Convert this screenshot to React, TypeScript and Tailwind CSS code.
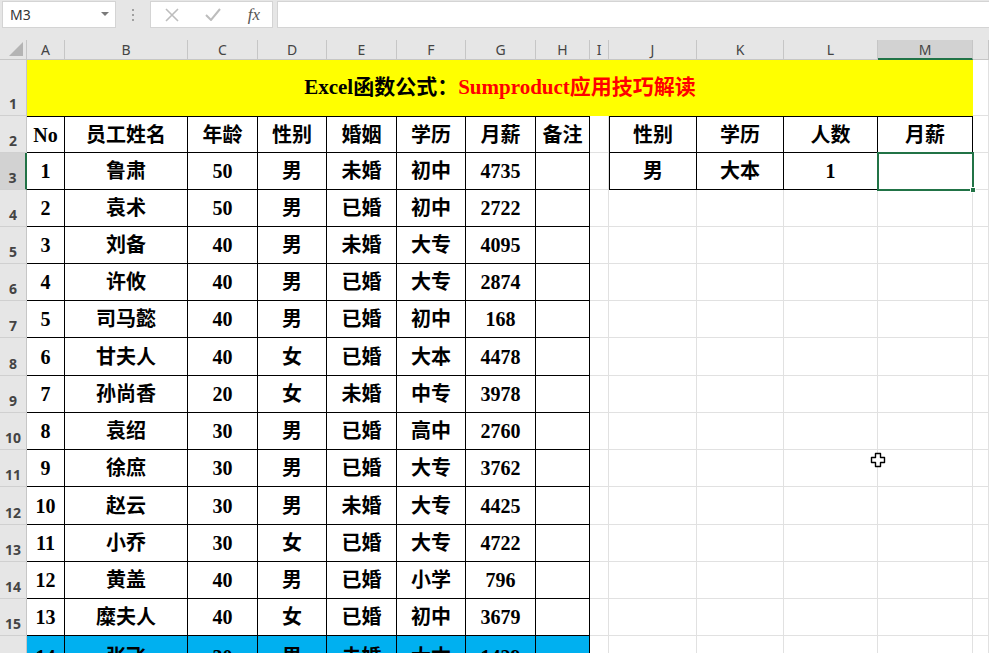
import React from "react";

const cols = ["A", "B", "C", "D", "E", "F", "G", "H", "I", "J", "K", "L", "M", ""];

const staff = [
  ["1", "鲁肃", "50", "男", "未婚", "初中", "4735"],
  ["2", "袁术", "50", "男", "已婚", "初中", "2722"],
  ["3", "刘备", "40", "男", "未婚", "大专", "4095"],
  ["4", "许攸", "40", "男", "已婚", "大专", "2874"],
  ["5", "司马懿", "40", "男", "已婚", "初中", "168"],
  ["6", "甘夫人", "40", "女", "已婚", "大本", "4478"],
  ["7", "孙尚香", "20", "女", "未婚", "中专", "3978"],
  ["8", "袁绍", "30", "男", "已婚", "高中", "2760"],
  ["9", "徐庶", "30", "男", "已婚", "大专", "3762"],
  ["10", "赵云", "30", "男", "未婚", "大专", "4425"],
  ["11", "小乔", "30", "女", "已婚", "大专", "4722"],
  ["12", "黄盖", "40", "男", "已婚", "小学", "796"],
  ["13", "糜夫人", "40", "女", "已婚", "初中", "3679"],
  ["14", "张飞", "30", "男", "未婚", "大本", "1429"],
];

const head = ["No", "员工姓名", "年龄", "性别", "婚姻", "学历", "月薪", "备注"];
const lookupHead = ["性别", "学历", "人数", "月薪"];
const lookupRow = ["男", "大本", "1", ""];

function RowHead({ n, active }: { n: number; active?: boolean }) {
  return (
    <div
      className={
        "flex items-end justify-center pb-[1px] text-[14px] text-[#444] font-['Noto_Sans',sans-serif] border-b border-[#d0d0d0] " +
        (active
          ? "bg-[#d2d2d2] border-r-2 border-r-[#217346]"
          : "bg-[#e6e6e6] border-r border-r-[#c6c6c6]")
      }
    >
      {n}
    </div>
  );
}

function Cell({
  children,
  className = "",
}: {
  children?: React.ReactNode;
  className?: string;
}) {
  return (
    <div
      className={
        "relative flex items-center justify-center border-r border-b whitespace-nowrap overflow-hidden " +
        className
      }
    >
      {children}
    </div>
  );
}

export default function App() {
  const rows: React.ReactNode[] = [];

  // row 2: headers
  rows.push(<RowHead key="h2" n={2} />);
  head.forEach((h, i) =>
    rows.push(
      <Cell key={"hd" + i} className="border-black border-t">
        {h}
      </Cell>
    )
  );
  rows.push(<Cell key="i2" className="border-[#e1e1e1]" />);
  lookupHead.forEach((h, i) =>
    rows.push(
      <Cell
        key={"lh" + i}
        className={"border-black border-t " + (i === 0 ? "border-l" : "")}
      >
        {h}
      </Cell>
    )
  );
  rows.push(<Cell key="n2" className="border-[#e1e1e1]" />);

  staff.forEach((s, r) => {
    const rowNo = r + 3;
    const blue = r === staff.length - 1;
    rows.push(<RowHead key={"rh" + rowNo} n={rowNo} active={rowNo === 3} />);
    [...s, ""].forEach((v, i) =>
      rows.push(
        <Cell
          key={rowNo + "-" + i}
          className={"border-black " + (blue ? "bg-[#00b0f0] items-start pt-[6px]" : "")}
        >
          {v}
        </Cell>
      )
    );
    rows.push(<Cell key={"i" + rowNo} className="border-[#e1e1e1]" />);
    if (rowNo === 3) {
      lookupRow.forEach((v, i) =>
        rows.push(
          <Cell
            key={"lr" + i}
            className={"border-black " + (i === 0 ? "border-l" : "")}
          >
            {v}
          </Cell>
        )
      );
    } else {
      for (let i = 0; i < 4; i++)
        rows.push(<Cell key={"e" + rowNo + i} className="border-[#e1e1e1]" />);
    }
    rows.push(<Cell key={"n" + rowNo} className="border-[#e1e1e1]" />);
  });

  return (
    <div className="relative w-[989px] h-[653px] overflow-hidden bg-white">
      {/* formula bar */}
      <div className="h-[40px] bg-[#e6e6e6] pt-[1px] flex items-start">
        <div className="ml-[2px] w-[114px] h-[27px] bg-white border border-[#d4d4d4] flex items-center justify-between pl-[7px] pr-[6px]">
          <span className="text-[14px] text-[#333] font-['Noto_Sans',sans-serif]">M3</span>
          <svg width="8" height="5" viewBox="0 0 8 5">
            <path d="M0 0 L8 0 L4 4 Z" fill="#7a7a7a" />
          </svg>
        </div>
        <div className="w-[34px] h-[27px] flex flex-col items-center justify-center gap-[3px]">
          <span className="w-[2px] h-[2px] bg-[#a0a0a0]" />
          <span className="w-[2px] h-[2px] bg-[#a0a0a0]" />
          <span className="w-[2px] h-[2px] bg-[#a0a0a0]" />
        </div>
        <div className="w-[123px] h-[27px] bg-white border border-[#d4d4d4] flex items-center pl-[14px] pr-[12px] justify-between">
          <svg width="14" height="14" viewBox="0 0 14 14">
            <path d="M1 1 L13 13 M13 1 L1 13" stroke="#bdbdbd" strokeWidth="1.6" />
          </svg>
          <svg width="16" height="13" viewBox="0 0 16 13">
            <path d="M1 7 L6 12 L15 1" stroke="#bdbdbd" strokeWidth="2" fill="none" />
          </svg>
          <span className="text-[17px] italic text-[#555] font-['Liberation_Serif',serif] leading-none">
            fx
          </span>
        </div>
        <div className="ml-[4px] flex-1 h-[27px] bg-white border border-[#d4d4d4] border-r-0" />
      </div>

      {/* sheet grid */}
      <div className="grid grid-cols-[27px_38px_123px_70px_69px_70px_69px_70px_54px_19px_88px_87px_94px_95px_16px] grid-rows-[20px_56px_37px_37px_37px_37px_37px_37px_38px_37px_37px_37px_38px_37px_37px_37px_37px] text-[20px] font-bold text-black font-['Liberation_Serif','Noto_Sans_CJK_SC',serif]">
        {/* column headers */}
        <div className="bg-[#e6e6e6] border-r border-b border-[#c6c6c6] flex items-end justify-end pr-[3px] pb-[3px]">
          <svg width="14" height="14" viewBox="0 0 14 14">
            <path d="M14 0 L14 14 L0 14 Z" fill="#b4b4b4" />
          </svg>
        </div>
        {cols.map((c, i) => (
          <div
            key={"c" + i}
            className={
              "flex items-center justify-center text-[14px] font-normal text-[#444] font-['Noto_Sans',sans-serif] border-r border-r-[#c6c6c6] " +
              (c === "M"
                ? "bg-[#d2d2d2] border-b-2 border-b-[#217346]"
                : "bg-[#e6e6e6] border-b border-b-[#c6c6c6]")
            }
          >
            {c}
          </div>
        ))}

        {/* row 1: title */}
        <RowHead n={1} />
        <div className="col-span-13 bg-[#ffff00] flex items-center justify-center text-[21px]">
          <span>Excel函数公式：</span>
          <span className="text-[#ff0000]">Sumproduct应用技巧解读</span>
        </div>
        <Cell className="border-[#e1e1e1]" />

        {rows}
      </div>

      {/* selection on M3 */}
      <div className="absolute left-[877px] top-[152px] w-[97px] h-[39px] border-2 border-[#217346] pointer-events-none" />
      <div className="absolute left-[970px] top-[187px] w-[6px] h-[6px] bg-[#217346] border border-white" />

      {/* mouse cursor */}
      <svg className="absolute left-[870px] top-[452px]" width="16" height="16" viewBox="0 0 16 16">
        <path
          d="M5.5 1.5 H10.5 V5.5 H14.5 V10.5 H10.5 V14.5 H5.5 V10.5 H1.5 V5.5 H5.5 Z"
          fill="white"
          stroke="black"
          strokeWidth="1.4"
          strokeLinejoin="round"
        />
      </svg>
    </div>
  );
}
